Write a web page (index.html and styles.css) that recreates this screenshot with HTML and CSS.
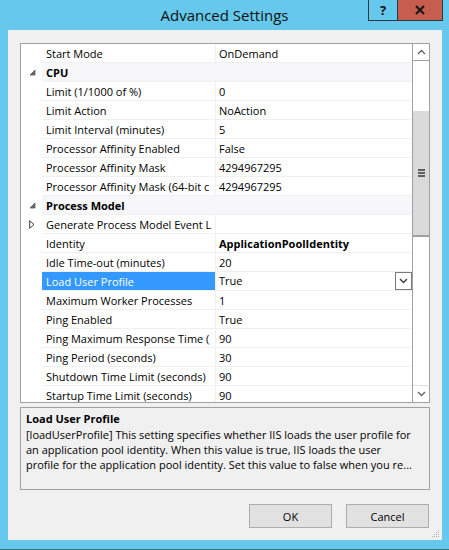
FILE: index.html
```html
<!DOCTYPE html>
<html>
<head>
<meta charset="utf-8">
<link rel="stylesheet" href="styles.css">
</head>
<body>
<div class="window">
  <div class="titlebar">
    <div></div>
    <div class="title">Advanced Settings</div>
    <div class="caption-buttons">
      <div class="cap-btn help">?</div>
      <div class="cap-btn close">
        <svg width="12" height="10" viewBox="0 0 12 10"><path d="M2 1 L10 9 M10 1 L2 9" stroke="#1a1a1a" stroke-width="2.2" fill="none"/></svg>
      </div>
    </div>
  </div>
  <div class="client">
    <div class="grid">
      <div class="rows">
        <div class="row"><div class="gut"></div><div class="name">Start Mode</div><div class="val">OnDemand</div></div>
        <div class="row cat"><div class="gut"><svg width="7" height="7" viewBox="0 0 7 7"><path d="M6 1 L6 6 L1 6 Z" fill="#6d6d6d" stroke="#5a5a5a" stroke-width="0.8"/></svg></div><div class="name">CPU</div></div>
        <div class="row"><div class="gut"></div><div class="name">Limit (1/1000 of %)</div><div class="val">0</div></div>
        <div class="row"><div class="gut"></div><div class="name">Limit Action</div><div class="val">NoAction</div></div>
        <div class="row"><div class="gut"></div><div class="name">Limit Interval (minutes)</div><div class="val">5</div></div>
        <div class="row"><div class="gut"></div><div class="name">Processor Affinity Enabled</div><div class="val">False</div></div>
        <div class="row"><div class="gut"></div><div class="name">Processor Affinity Mask</div><div class="val">4294967295</div></div>
        <div class="row"><div class="gut"></div><div class="name">Processor Affinity Mask (64-bit c</div><div class="val">4294967295</div></div>
        <div class="row cat"><div class="gut"><svg width="7" height="7" viewBox="0 0 7 7"><path d="M6 1 L6 6 L1 6 Z" fill="#6d6d6d" stroke="#5a5a5a" stroke-width="0.8"/></svg></div><div class="name">Process Model</div></div>
        <div class="row"><div class="gut"><svg width="6" height="9" viewBox="0 0 6 9"><path d="M0.7 0.7 L5 4.5 L0.7 8.3 Z" fill="none" stroke="#3a3a3a" stroke-width="1"/></svg></div><div class="name">Generate Process Model Event L</div><div class="val"></div></div>
        <div class="row"><div class="gut"></div><div class="name">Identity</div><div class="val bold">ApplicationPoolIdentity</div></div>
        <div class="row"><div class="gut"></div><div class="name">Idle Time-out (minutes)</div><div class="val">20</div></div>
        <div class="row sel"><div class="gut"></div><div class="name">Load User Profile</div><div class="val">True<span class="drop"><svg width="9" height="6" viewBox="0 0 9 6"><path d="M1 1 L4.5 4.5 L8 1" stroke="#3a3a3a" stroke-width="1.4" fill="none"/></svg></span></div></div>
        <div class="row"><div class="gut"></div><div class="name">Maximum Worker Processes</div><div class="val">1</div></div>
        <div class="row"><div class="gut"></div><div class="name">Ping Enabled</div><div class="val">True</div></div>
        <div class="row"><div class="gut"></div><div class="name">Ping Maximum Response Time (</div><div class="val">90</div></div>
        <div class="row"><div class="gut"></div><div class="name">Ping Period (seconds)</div><div class="val">30</div></div>
        <div class="row"><div class="gut"></div><div class="name">Shutdown Time Limit (seconds)</div><div class="val">90</div></div>
        <div class="row"><div class="gut"></div><div class="name">Startup Time Limit (seconds)</div><div class="val">90</div></div>
      </div>
      <div class="scrollbar">
        <div class="sb-btn up"><svg width="9" height="6" viewBox="0 0 9 6"><path d="M1 5 L4.5 1.5 L8 5" stroke="#606060" stroke-width="1.3" fill="none"/></svg></div>
        <div class="track">
          <div class="thumb">
            <div class="grip"></div><div class="grip"></div><div class="grip"></div>
          </div>
        </div>
        <div class="sb-btn down"><svg width="9" height="6" viewBox="0 0 9 6"><path d="M1 1 L4.5 4.5 L8 1" stroke="#606060" stroke-width="1.3" fill="none"/></svg></div>
      </div>
    </div>
    <div class="desc">
      <div class="desc-title">Load User Profile</div>
      <div class="desc-line">[loadUserProfile] This setting specifies whether IIS loads the user profile for</div>
      <div class="desc-line">an application pool identity. When this value is true, IIS loads the user</div>
      <div class="desc-line">profile for the application pool identity. Set this value to false when you re...</div>
    </div>
    <div class="footer">
      <div class="btn">OK</div>
      <div class="btn">Cancel</div>
    </div>
    <svg class="grip-corner" width="8" height="8" viewBox="0 0 8 8">
      <rect x="6" y="0" width="1" height="1" fill="#b0b0b0"/>
      <rect x="4" y="2" width="1" height="1" fill="#b0b0b0"/><rect x="6" y="2" width="1" height="1" fill="#b0b0b0"/>
      <rect x="2" y="4" width="1" height="1" fill="#b0b0b0"/><rect x="4" y="4" width="1" height="1" fill="#b0b0b0"/><rect x="6" y="4" width="1" height="1" fill="#b0b0b0"/>
      <rect x="0" y="6" width="1" height="1" fill="#b0b0b0"/><rect x="2" y="6" width="1" height="1" fill="#b0b0b0"/><rect x="4" y="6" width="1" height="1" fill="#b0b0b0"/><rect x="6" y="6" width="1" height="1" fill="#b0b0b0"/>
    </svg>
  </div>
</div>
</body>
</html>
```
FILE: styles.css
```css
* { box-sizing: border-box; }
html, body { margin: 0; padding: 0; }
body {
  width: 449px;
  height: 550px;
  overflow: hidden;
  font-family: "Open Sans", "Noto Sans", sans-serif;
  font-size: 11px;
  color: #000;
}
.window {
  width: 449px;
  height: 550px;
  background: #65c8ec;
  border-bottom: 1px solid #3d6f82;
  display: flex;
  flex-direction: column;
}
.titlebar {
  height: 30px;
  display: grid;
  grid-template-columns: 1fr auto 1fr;
  align-items: start;
}
.title {
  font-size: 15px;
  line-height: 31px;
  color: #111;
}
.caption-buttons {
  justify-self: end;
  display: flex;
  margin-right: 6px;
}
.cap-btn {
  height: 21px;
  display: flex;
  align-items: center;
  justify-content: center;
  border: 1px solid #2b3a40;
  border-top: none;
}
.help {
  width: 29px;
  font-weight: bold;
  font-size: 13px;
  color: #111;
  border-right: none;
}
.close {
  width: 46px;
  background: #c75d4f;
}
.client {
  position: relative;
  margin: 0 7px 9px 8px;
  flex: 1;
  background: #f0f0f0;
  padding: 13px 12px 0 12px;
  display: flex;
  flex-direction: column;
}
.grid {
  height: 360px;
  border: 1px solid #a0a0a0;
  background: #fff;
  display: flex;
}
.rows {
  flex: 1;
  overflow: hidden;
}
.row {
  height: 19px;
  display: grid;
  grid-template-columns: 21px 174px 1fr;
}
.gut {
  background: #fff;
  display: flex;
  align-items: center;
  padding-left: 8px;
}
.name, .val {
  line-height: 17px;
  padding-top: 1px;
  border-bottom: 1px solid #f0f0f0;
  white-space: nowrap;
  overflow: hidden;
}
.name {
  padding-left: 4px;
  border-right: 1px solid #f0f0f0;
}
.val {
  padding-left: 3px;
  display: flex;
  align-items: center;
}
.bold { font-weight: bold; }
.cat .name {
  grid-column: span 2;
  background: #f7f7f9;
  font-weight: bold;
  border-right: none;
}
.sel .name {
  background: #3399ff;
  color: #fff;
}
.sel .val { padding-top: 0; line-height: 18px; }
.drop {
  margin-left: auto;
  width: 17px;
  height: 18px;
  border: 1px solid #7a7a7a;
  background: #fff;
  display: flex;
  align-items: center;
  justify-content: center;
}
.scrollbar {
  width: 17px;
  border-left: 1px solid #a0a0a0;
  display: flex;
  flex-direction: column;
  background: #fff;
}
.sb-btn {
  height: 17px;
  display: flex;
  align-items: center;
  justify-content: center;
}
.sb-btn.up { border-bottom: 1px solid #a0a0a0; }
.sb-btn.down { border-top: 1px solid #e0e0e0; }
.track {
  flex: 1;
  background: #fff;
}
.thumb {
  margin-top: 50px;
  height: 126px;
  background: #dadada;
  border-bottom: 2px solid #a0a0a0;
  display: flex;
  flex-direction: column;
  align-items: center;
  justify-content: center;
  gap: 1px;
}
.grip {
  width: 7px;
  height: 2px;
  background: #606060;
}
.desc {
  margin-top: 4px;
  height: 83px;
  border: 1px solid #a0a0a0;
  background: #f0f0f0;
  padding: 2px 5px;
}
.desc-title {
  font-weight: bold;
  line-height: 17px;
}
.desc-line {
  line-height: 15px;
  white-space: nowrap;
  overflow: hidden;
}
.footer {
  margin-top: 14px;
  display: flex;
  justify-content: flex-end;
  gap: 14px;
  padding-right: 1px;
}
.btn {
  width: 83px;
  height: 24px;
  border: 1px solid #adadad;
  background: #e1e1e1;
  display: flex;
  align-items: center;
  justify-content: center;
}
.grip-corner {
  position: absolute;
  right: 2px;
  bottom: 2px;
}
```
